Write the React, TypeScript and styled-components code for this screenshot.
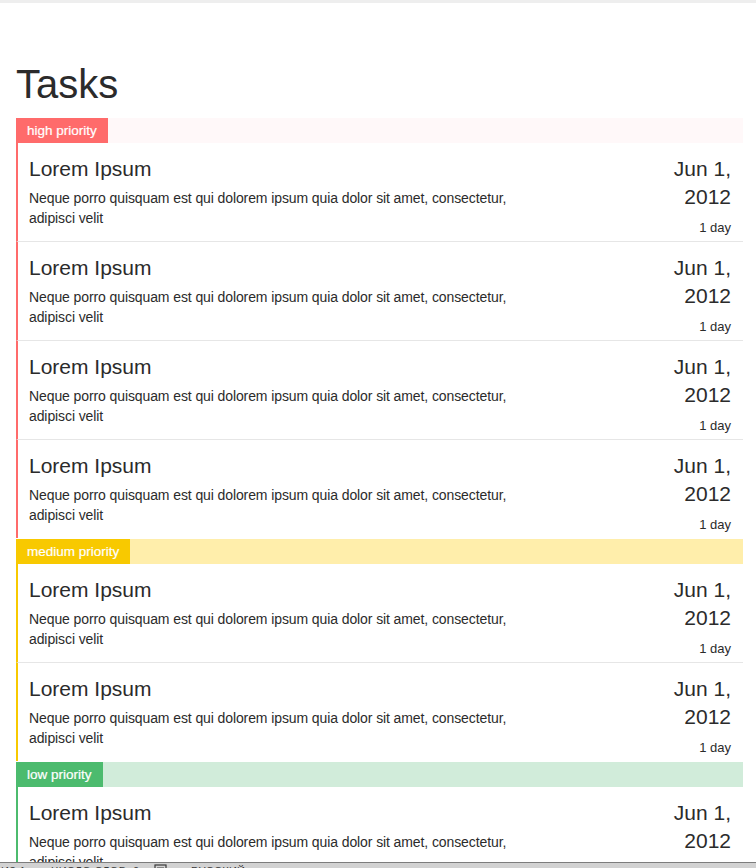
import React from "react";
import styled, { createGlobalStyle } from "styled-components";

const GlobalStyle = createGlobalStyle`
  html, body { margin: 0; padding: 0; background: #ffffff; }
  body {
    font-family: "Liberation Sans", Arial, Helvetica, sans-serif;
    color: #333333;
    font-size: 14px;
    line-height: 20px;
  }
`;

type Level = "high" | "medium" | "low";

const palette: Record<Level, { strong: string; soft: string }> = {
  high: { strong: "#ff6b6b", soft: "#fff8f9" },
  medium: { strong: "#f8c900", soft: "#ffeeab" },
  low: { strong: "#4cbb6e", soft: "#d1ecda" },
};

const TopStrip = styled.div`
  height: 3px;
  background: #eeeeee;
`;

const Page = styled.main`
  padding: 0 13px 0 16px;
  width: 727px;
`;

const Title = styled.h1`
  margin: 59px 0 12px;
  font-size: 40px;
  line-height: 44px;
  font-weight: 400;
  color: #2b2b2b;
`;

const Section = styled.section`
  margin-bottom: 1px;
`;

const SectionHeader = styled.div<{ $level: Level }>`
  display: flex;
  height: 25px;
  background: ${(p) => palette[p.$level].soft};
`;

const Label = styled.span<{ $level: Level }>`
  display: inline-block;
  padding: 0 11px;
  line-height: 25px;
  font-size: 13.5px;
  color: #ffffff;
  background: ${(p) => palette[p.$level].strong};
  -webkit-text-stroke: 0.2px #ffffff;
`;

const Item = styled.article<{ $level: Level }>`
  display: flex;
  justify-content: space-between;
  align-items: flex-start;
  box-sizing: content-box;
  height: 86px;
  padding: 12px 12px 0 11px;
  border-left: 2px solid ${(p) => palette[p.$level].strong};
  border-bottom: 1px solid #e6e6e6;
  &:last-child {
    border-bottom: none;
  }
`;

const Body = styled.div`
  width: 500px;
`;

const Heading = styled.h4`
  margin: 2px 0 8px;
  font-size: 21px;
  line-height: 23px;
  font-weight: 400;
  color: #2b2b2b;
`;

const Text = styled.p`
  margin: 0;
  font-size: 14px;
  line-height: 20px;
  letter-spacing: -0.1px;
  color: #2b2b2b;
`;

const DateCol = styled.div`
  width: 72px;
  text-align: right;
`;

const DateText = styled.div`
  font-size: 21px;
  line-height: 28px;
  color: #2b2b2b;
`;

const Duration = styled.div`
  margin-top: 8px;
  font-size: 13px;
  line-height: 18px;
  color: #2b2b2b;
`;

const StatusBar = styled.footer`
  position: fixed;
  left: 0;
  right: 0;
  top: 862px;
  height: 30px;
  box-sizing: border-box;
  border-top: 1px solid #7d7d7d;
  background: #d2d2d2;
  display: grid;
  grid-template-columns: 50px 103px 37px auto;
  align-items: start;
  padding: 1px 0 0 1px;
  font-size: 11px;
  line-height: 14px;
  color: #3a3a3a;
  text-transform: uppercase;
  letter-spacing: 0.3px;
`;

const StatusIcon = styled.svg`
  width: 15px;
  height: 14px;
`;

const tasks: { level: Level; title: string; count: number }[] = [
  { level: "high", title: "high priority", count: 4 },
  { level: "medium", title: "medium priority", count: 2 },
  { level: "low", title: "low priority", count: 1 },
];

const desc =
  "Neque porro quisquam est qui dolorem ipsum quia dolor sit amet, consectetur, adipisci velit";

export default function App() {
  return (
    <>
      <GlobalStyle />
      <TopStrip />
      <Page>
        <Title>Tasks</Title>
        {tasks.map((s) => (
          <Section key={s.level}>
            <SectionHeader $level={s.level}>
              <Label $level={s.level}>{s.title}</Label>
            </SectionHeader>
            {Array.from({ length: s.count }).map((_, i) => (
              <Item key={i} $level={s.level}>
                <Body>
                  <Heading>Lorem Ipsum</Heading>
                  <Text>{desc}</Text>
                </Body>
                <DateCol>
                  <DateText>Jun 1, 2012</DateText>
                  <Duration>1 day</Duration>
                </DateCol>
              </Item>
            ))}
          </Section>
        ))}
      </Page>
      <StatusBar>
        <span>из 1</span>
        <span>Число слов: 0</span>
        <StatusIcon viewBox="0 0 15 14">
          <rect x="1" y="1" width="11" height="12" fill="none" stroke="#3a3a3a" strokeWidth="1.2" />
          <path d="M3 4h7M3 6.5h7" stroke="#3a3a3a" strokeWidth="1" />
        </StatusIcon>
        <span>русский</span>
      </StatusBar>
    </>
  );
}
